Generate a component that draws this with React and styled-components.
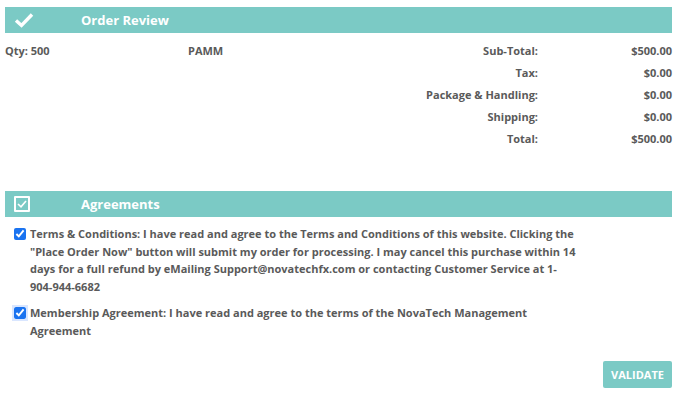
import React from "react";
import styled, { createGlobalStyle } from "styled-components";

const GlobalStyle = createGlobalStyle`
  body {
    margin: 0;
    background: #fff;
    font-family: "Open Sans", "Liberation Sans", sans-serif;
  }
`;

const teal = "#7bcac5";
const text = "#5a5a5a";

const Page = styled.div`
  width: 667px;
  padding: 7px 0 0 5px;
  display: flex;
  flex-direction: column;
`;

const SectionBar = styled.div`
  height: 26px;
  background: ${teal};
  display: flex;
  align-items: center;
  color: #fff;
  font-weight: 700;
  font-size: 13px;
  margin-top: ${(p) => p.$top || 0}px;
`;

const BarIcon = styled.div`
  width: 76px;
  padding-left: 9px;
  box-sizing: border-box;
  display: flex;
  align-items: center;
`;

const BoxIcon = styled.div`
  width: 16px;
  height: 16px;
  box-sizing: border-box;
  border: 2px solid #fff;
  border-radius: 1px;
  display: flex;
  align-items: center;
  justify-content: center;
`;

const SummaryGrid = styled.div`
  display: grid;
  grid-template-columns: 183px 1fr auto 134px;
  grid-auto-rows: 22px;
  margin-top: 6px;
  font-size: 11px;
  font-weight: 700;
  color: ${text};
  align-items: center;
`;

const Cell = styled.div`
  text-align: ${(p) => (p.$right ? "right" : "left")};
  white-space: nowrap;
`;

const Agreements = styled.div`
  display: flex;
  flex-direction: column;
  gap: 8px;
  padding: 8px 0 0 9px;
`;

const Agreement = styled.label`
  display: flex;
  align-items: flex-start;
  gap: 4px;
  width: 563px;
  font-size: 11px;
  font-weight: 700;
  line-height: 17.7px;
  color: ${text};
`;

const Check = styled.input`
  width: 12px;
  height: 12px;
  margin: 3px 0 0 0;
  flex: none;
  accent-color: #1a73f0;
  border-radius: 3px;
  outline: ${(p) => (p.$focus ? "2px solid rgba(80, 140, 255, 0.22)" : "none")};
`;

const Footer = styled.div`
  display: flex;
  justify-content: flex-end;
  margin-top: 22px;
`;

const ValidateButton = styled.button`
  width: 69px;
  height: 27px;
  border: none;
  border-radius: 2px;
  background: ${teal};
  color: #fff;
  font-family: inherit;
  font-weight: 700;
  font-size: 11px;
  padding: 0;
  cursor: pointer;
`;

const rows = [
  ["Sub-Total:", "$500.00"],
  ["Tax:", "$0.00"],
  ["Package & Handling:", "$0.00"],
  ["Shipping:", "$0.00"],
  ["Total:", "$500.00"],
];

export default function App() {
  return (
    <>
      <GlobalStyle />
      <Page>
        <SectionBar>
          <BarIcon>
            <svg width="20" height="16" viewBox="0 0 20 16">
              <path d="M2 8.5 L7.5 13.5 L18 2.5" fill="none" stroke="#fff" strokeWidth="3.4" />
            </svg>
          </BarIcon>
          Order Review
        </SectionBar>
        <SummaryGrid>
          {rows.map(([label, value], i) => (
            <React.Fragment key={label}>
              <Cell>{i === 0 ? "Qty: 500" : ""}</Cell>
              <Cell>{i === 0 ? "PAMM" : ""}</Cell>
              <Cell $right>{label}</Cell>
              <Cell $right>{value}</Cell>
            </React.Fragment>
          ))}
        </SummaryGrid>

        <SectionBar $top={42}>
          <BarIcon>
            <BoxIcon>
              <svg width="10" height="8" viewBox="0 0 10 8">
                <path d="M1 4 L4 6.8 L9 1" fill="none" stroke="#fff" strokeWidth="1.6" />
              </svg>
            </BoxIcon>
          </BarIcon>
          Agreements
        </SectionBar>
        <Agreements>
          <Agreement>
            <Check type="checkbox" defaultChecked />
            <span>
              Terms &amp; Conditions: I have read and agree to the Terms and Conditions of this website. Clicking the "Place Order Now" button will submit my order for processing. I may cancel this purchase within 14 days for a full refund by eMailing Support@novatechfx.com or contacting Customer Service at 1-904-944-6682
            </span>
          </Agreement>
          <Agreement>
            <Check type="checkbox" defaultChecked $focus />
            <span>
              Membership Agreement: I have read and agree to the terms of the NovaTech Management Agreement
            </span>
          </Agreement>
        </Agreements>
        <Footer>
          <ValidateButton>VALIDATE</ValidateButton>
        </Footer>
      </Page>
    </>
  );
}
